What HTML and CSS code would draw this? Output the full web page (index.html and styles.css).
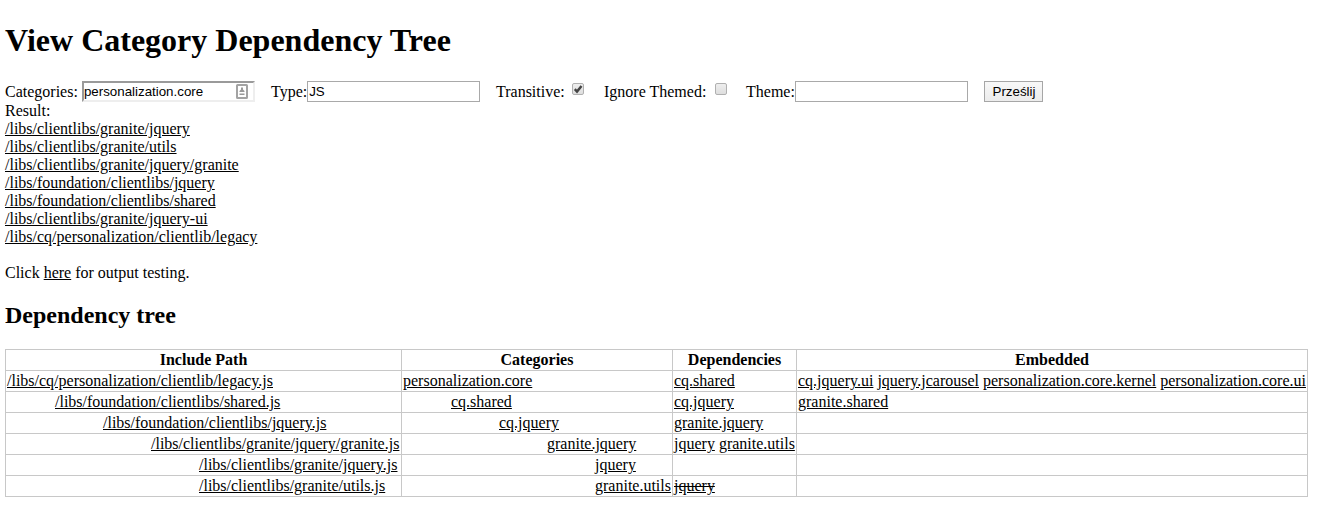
FILE: index.html
```html
<!DOCTYPE html>
<html lang="en">
<head>
<meta charset="utf-8">
<title>View Category Dependency Tree</title>
<link rel="stylesheet" href="styles.css">
</head>
<body>
<h1>View Category Dependency Tree</h1>
<form class="filters">
  <label class="f-categories">Categories: <span class="field inset"><input class="text" value="personalization.core"><svg class="autofill" width="12" height="15" viewBox="0 0 12 15"><rect x="1" y="1" width="10" height="13" rx="0.5" fill="#fff" stroke="#a3a3a3" stroke-width="2"/><path d="M5 3.5h2v2l1.5 1.5v1h-5V7L5 5.500zM3.500 9.500h5v1.500h-5z" fill="#999"/></svg></span></label>
  <label class="f-type">Type:<span class="field"><input class="text" value="JS"></span></label>
  <label class="f-transitive">Transitive: <span class="check"><svg width="10" height="10" viewBox="0 0 10 10"><path d="M1.800 5.200 4 7.500 8.500 2" fill="none" stroke="#444" stroke-width="2.500"/></svg></span></label>
  <label class="f-ignore">Ignore Themed: <span class="check"></span></label>
  <label class="f-theme">Theme:<span class="field"><input class="text" value=""></span></label>
  <button type="button" class="submit">Prześlij</button>
</form>
<div class="result">Result:<br>
<a>/libs/clientlibs/granite/jquery</a><br>
<a>/libs/clientlibs/granite/utils</a><br>
<a>/libs/clientlibs/granite/jquery/granite</a><br>
<a>/libs/foundation/clientlibs/jquery</a><br>
<a>/libs/foundation/clientlibs/shared</a><br>
<a>/libs/clientlibs/granite/jquery-ui</a><br>
<a>/libs/cq/personalization/clientlib/legacy</a><br>
<br>
Click <a>here</a> for output testing.</div>
<h2>Dependency tree</h2>
<table class="tree">
<colgroup><col class="c-path"><col class="c-cat"><col class="c-dep"><col class="c-emb"></colgroup>
<tr><th>Include Path</th><th>Categories</th><th>Dependencies</th><th>Embedded</th></tr>
<tr><td><a>/libs/cq/personalization/clientlib/legacy.js</a></td><td><a>personalization.core</a></td><td><a>cq.shared</a></td><td><a>cq.jquery.ui</a> <a>jquery.jcarousel</a> <a>personalization.core.kernel</a> <a>personalization.core.ui</a></td></tr>
<tr class="d1"><td><a>/libs/foundation/clientlibs/shared.js</a></td><td><a>cq.shared</a></td><td><a>cq.jquery</a></td><td><a>granite.shared</a></td></tr>
<tr class="d2"><td><a>/libs/foundation/clientlibs/jquery.js</a></td><td><a>cq.jquery</a></td><td><a>granite.jquery</a></td><td></td></tr>
<tr class="d3"><td><a>/libs/clientlibs/granite/jquery/granite.js</a></td><td><a>granite.jquery</a></td><td><a>jquery</a> <a>granite.utils</a></td><td></td></tr>
<tr class="d4"><td><a>/libs/clientlibs/granite/jquery.js</a></td><td><a>jquery</a></td><td></td><td></td></tr>
<tr class="d4"><td><a>/libs/clientlibs/granite/utils.js</a></td><td><a>granite.utils</a></td><td><a class="seen">jquery</a></td><td></td></tr>
</table>
</body>
</html>
```
FILE: styles.css
```css
body { margin: 0 0 0 5px; padding-top: 22px; background: #fff; color: #000; font: 16px/18px "Liberation Serif", "Times New Roman", serif; overflow: hidden; }
h1 { margin: 0; font-size: 32px; line-height: 37px; }
h2 { margin: 19px 0 20px; font-size: 24px; line-height: 28px; }
a { text-decoration: underline; }
.filters { display: flex; align-items: center; height: 21px; margin-top: 22px; margin-bottom: 0; white-space: pre; }
.filters label { display: flex; align-items: center; flex: none; }
.f-categories { width: 266px; }
.f-type { width: 225px; }
.f-transitive { width: 108px; }
.f-ignore { width: 142px; }
.f-theme { width: 238px; }
.field { position: relative; display: flex; box-sizing: border-box; width: 173px; height: 21px; border: 1px solid #a9a9a9; background: #fff; }
.inset { border: 2px solid; border-color: #9a9a9a #eee #eee #9a9a9a; }
.text { width: 100%; min-width: 0; padding: 0 1px; border: 0; outline: 0; background: transparent; font: 13.33px "Liberation Sans", Arial, sans-serif; color: #000; }
.inset .text { padding: 0; }
.autofill { position: absolute; right: 5px; top: 1px; }
.check { display: flex; box-sizing: border-box; width: 12px; height: 12px; margin: 0 0 5px 3px; border: 1px solid #b0b0b0; border-radius: 2px; background: linear-gradient(#eee, #dedede); }
.f-ignore .check { margin-left: 5px; }
.submit { box-sizing: border-box; width: 59px; height: 21px; padding: 0 0 0 1px; border: 1px solid #a6a6a6; background: linear-gradient(#f8f8f8, #ececec); font: 13.33px "Liberation Sans", Arial, sans-serif; color: #000; }
.result { white-space: normal; }
.tree { width: 1303px; table-layout: fixed; border-collapse: collapse; white-space: nowrap; }
.tree th, .tree td { height: 18px; padding: 1px; border: 1px solid #c8c8c8; }
.c-path { width: 396px; }
.c-cat { width: 271px; }
.c-dep { width: 124px; }
.c-emb { width: 511px; }
.d1 td:nth-child(-n+2) { padding-left: 49px; }
.d2 td:nth-child(-n+2) { padding-left: 97px; }
.d3 td:nth-child(-n+2) { padding-left: 145px; }
.d4 td:nth-child(-n+2) { padding-left: 193px; }
.seen { text-decoration: underline line-through; }
```
